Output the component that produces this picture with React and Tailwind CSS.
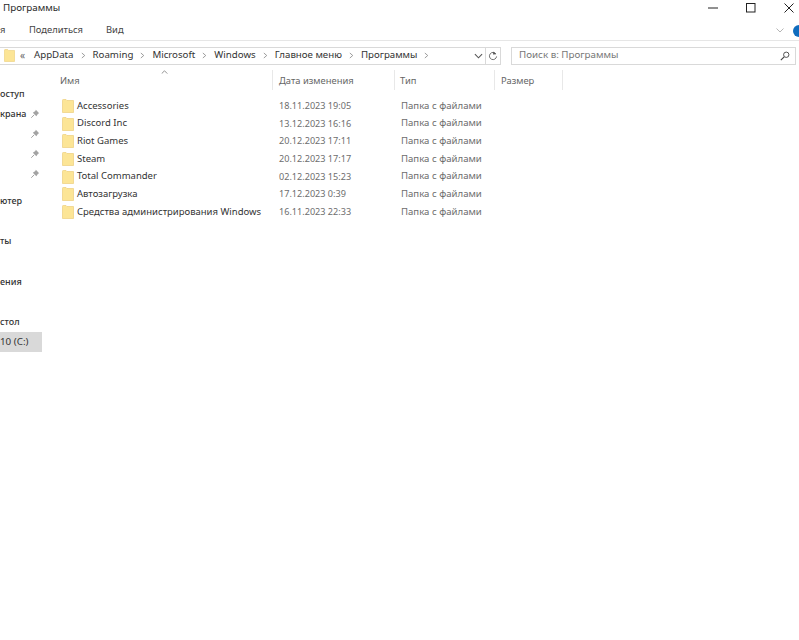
import React from "react";

const files = [
  { name: "Accessories", date: "18.11.2023 19:05" },
  { name: "Discord Inc", date: "13.12.2023 16:16" },
  { name: "Riot Games", date: "20.12.2023 17:11" },
  { name: "Steam", date: "20.12.2023 17:17" },
  { name: "Total Commander", date: "02.12.2023 15:23" },
  { name: "Автозагрузка", date: "17.12.2023 0:39" },
  { name: "Средства администрирования Windows", date: "16.11.2023 22:33" },
];

const crumbs = ["AppData", "Roaming", "Microsoft", "Windows", "Главное меню", "Программы"];

const Folder = ({ className }) => (
  <svg viewBox="0 0 12 14" className={className}>
    <path d="M0.5 1.2 Q0.5 0.5 1.2 0.5 L4 0.5 L5 1.5 L11.5 1.5 L11.5 13.5 L0.5 13.5 Z" fill="#fce596" stroke="#eccf7c" strokeWidth="0.7" />
  </svg>
);

const Pin = () => (
  <svg viewBox="0 0 12 12" className="w-[10px] h-[10px]">
    <path d="M7 1 L11 5 L9.6 5.6 L7.6 8.8 L3.4 4.6 L6.4 2.4 Z" fill="#a3a3a3" />
    <path d="M5 7 L1.5 10.5" stroke="#a3a3a3" strokeWidth="1.2" />
  </svg>
);

const Chevron = () => (
  <svg viewBox="0 0 6 8" className="w-[5px] h-[7px] shrink-0">
    <path d="M1 1 L4.5 4 L1 7" fill="none" stroke="#888" strokeWidth="1" />
  </svg>
);

const SideRow = ({ label, pin, className = "" }) => (
  <div className={`h-5 flex items-center ${className}`}>
    <span>{label}</span>
    {pin && <span className="absolute left-[30px]"><Pin /></span>}
  </div>
);

export default function App() {
  return (
    <div
      className="w-[799px] h-[640px] bg-white overflow-hidden flex flex-col text-[9.6px] text-[#2a2a2a]"
      style={{ fontFamily: '"Noto Sans", sans-serif' }}
    >
      {/* title bar */}
      <div className="h-4 flex items-center justify-between shrink-0">
        <span className="ml-[3px] text-[9.8px]">Программы</span>
        <div className="flex items-center text-black">
          <svg viewBox="0 0 10 10" className="w-[10px] h-[10px] mr-7">
            <path d="M0 5 H10" stroke="#222" strokeWidth="1" />
          </svg>
          <svg viewBox="0 0 10 10" className="w-[10px] h-[10px] mr-7">
            <rect x="0.5" y="0.5" width="8.5" height="8.5" fill="none" stroke="#222" strokeWidth="1" />
          </svg>
          <svg viewBox="0 0 10 10" className="w-[10px] h-[10px] mr-[5px]">
            <path d="M0.5 0.5 L9.5 9.5 M9.5 0.5 L0.5 9.5" stroke="#222" strokeWidth="1" />
          </svg>
        </div>
      </div>

      {/* ribbon tabs */}
      <div className="h-[25px] flex items-center border-b border-[#e6e6e6] shrink-0 pt-[5px] text-[#444] text-[9.4px]">
        <span className="w-[29px]">я</span>
        <span className="w-[77px]">Поделиться</span>
        <span>Вид</span>
        <svg viewBox="0 0 8 5" className="w-[8px] h-[5px] ml-auto mr-[9px]">
          <path d="M0.5 0.5 L4 4 L7.5 0.5" fill="none" stroke="#b5b5b5" strokeWidth="1" />
        </svg>
        <span className="w-[12px] h-[12px] mr-[-6px] shrink-0 rounded-full bg-[#0f6cbd]" />
      </div>

      {/* address row */}
      <div className="h-[29px] flex items-center shrink-0 pr-[3px]">
        <div className="w-[501px] h-[18px] flex items-center border border-l-0 border-[#d9d9d9]">
          <Folder className="w-[11px] h-[13px] ml-[4px] mr-[5px] shrink-0" />
          <span className="text-[#666] text-[10px] w-[14px]">«</span>
          <div className="flex items-center gap-[7px] text-[#333] text-[9.7px]">
            {crumbs.map((c) => (
              <React.Fragment key={c}>
                <span>{c}</span>
                <Chevron />
              </React.Fragment>
            ))}
          </div>
          <svg viewBox="0 0 10 6" className="w-[9px] h-[6px] ml-auto mr-[2px]">
            <path d="M1 1 L5 5 L9 1" fill="none" stroke="#555" strokeWidth="1.2" />
          </svg>
          <div className="w-[15px] h-full border-l border-[#d9d9d9] flex items-center justify-center">
            <svg viewBox="0 0 12 12" className="w-[10px] h-[10px]">
              <path d="M9.5 3.5 A4.3 4.3 0 1 0 10.3 6.5" fill="none" stroke="#555" strokeWidth="1" />
              <path d="M6.5 0.5 L9.8 3.8 L6 4.2 Z" fill="#555" />
            </svg>
          </div>
        </div>
        <div className="ml-[10px] flex-1 h-[18px] flex items-center justify-between border border-[#d9d9d9] pl-[7px] pr-[5px] text-[#777] text-[9.8px]">
          <span>Поиск в: Программы</span>
          <svg viewBox="0 0 12 12" className="w-[10px] h-[10px]">
            <circle cx="7.5" cy="4.5" r="3.2" fill="none" stroke="#444" strokeWidth="1.1" />
            <path d="M5 7 L1 11" stroke="#444" strokeWidth="1.4" />
          </svg>
        </div>
      </div>

      {/* body */}
      <div className="flex flex-1 min-h-0">
        <div className="relative w-[42px] shrink-0 pt-[14px] font-medium text-[#333] text-[9px] whitespace-nowrap">
          <SideRow label="оступ" />
          <SideRow label="крана" pin />
          <SideRow label="" pin />
          <SideRow label="" pin />
          <SideRow label="" pin />
          <SideRow label="ютер" className="mt-[7px]" />
          <SideRow label="ты" className="mt-5" />
          <SideRow label="ения" className="mt-[21px]" />
          <SideRow label="стол" className="mt-5" />
          <SideRow label="10 (C:)" className="bg-[#d9d9d9] font-normal text-[9.8px]" />
        </div>

        <div className="flex-1 min-w-0 relative">
          <svg viewBox="0 0 8 5" className="absolute left-[119px] top-0 w-[7px] h-[4px]">
            <path d="M0.5 4.5 L4 1 L7.5 4.5" fill="none" stroke="#777" strokeWidth="1" />
          </svg>

          {/* column headers */}
          <div className="h-5 flex items-center text-[#666] text-[9.4px]">
            <div className="w-[231px] h-full flex items-center pl-[18px] pt-[2px] border-r border-[#e8e8e8]">Имя</div>
            <div className="w-[122px] h-full flex items-center pl-[6px] pt-[2px] border-r border-[#e8e8e8]">Дата изменения</div>
            <div className="w-[100px] h-full flex items-center pl-[5px] pt-[2px] border-r border-[#e8e8e8]">Тип</div>
            <div className="w-[68px] h-full flex items-center pl-[6px] pt-[2px] border-r border-[#e8e8e8]">Размер</div>
          </div>

          {/* file rows */}
          <div className="mt-[7px]">
            {files.map((f) => (
              <div key={f.name} className="h-[17.7px] flex items-center whitespace-nowrap">
                <div className="w-[231px] flex items-center pl-[20px]">
                  <Folder className="w-[12px] h-[14px] mr-[3px] shrink-0" />
                  <span className="text-[#333] text-[9.5px]">{f.name}</span>
                </div>
                <div className="w-[122px] pl-[6px] text-[#6d6d6d] text-[9.1px]">{f.date}</div>
                <div className="pl-[6px] text-[#6d6d6d] text-[9.6px]">Папка с файлами</div>
              </div>
            ))}
          </div>
        </div>
      </div>
    </div>
  );
}
